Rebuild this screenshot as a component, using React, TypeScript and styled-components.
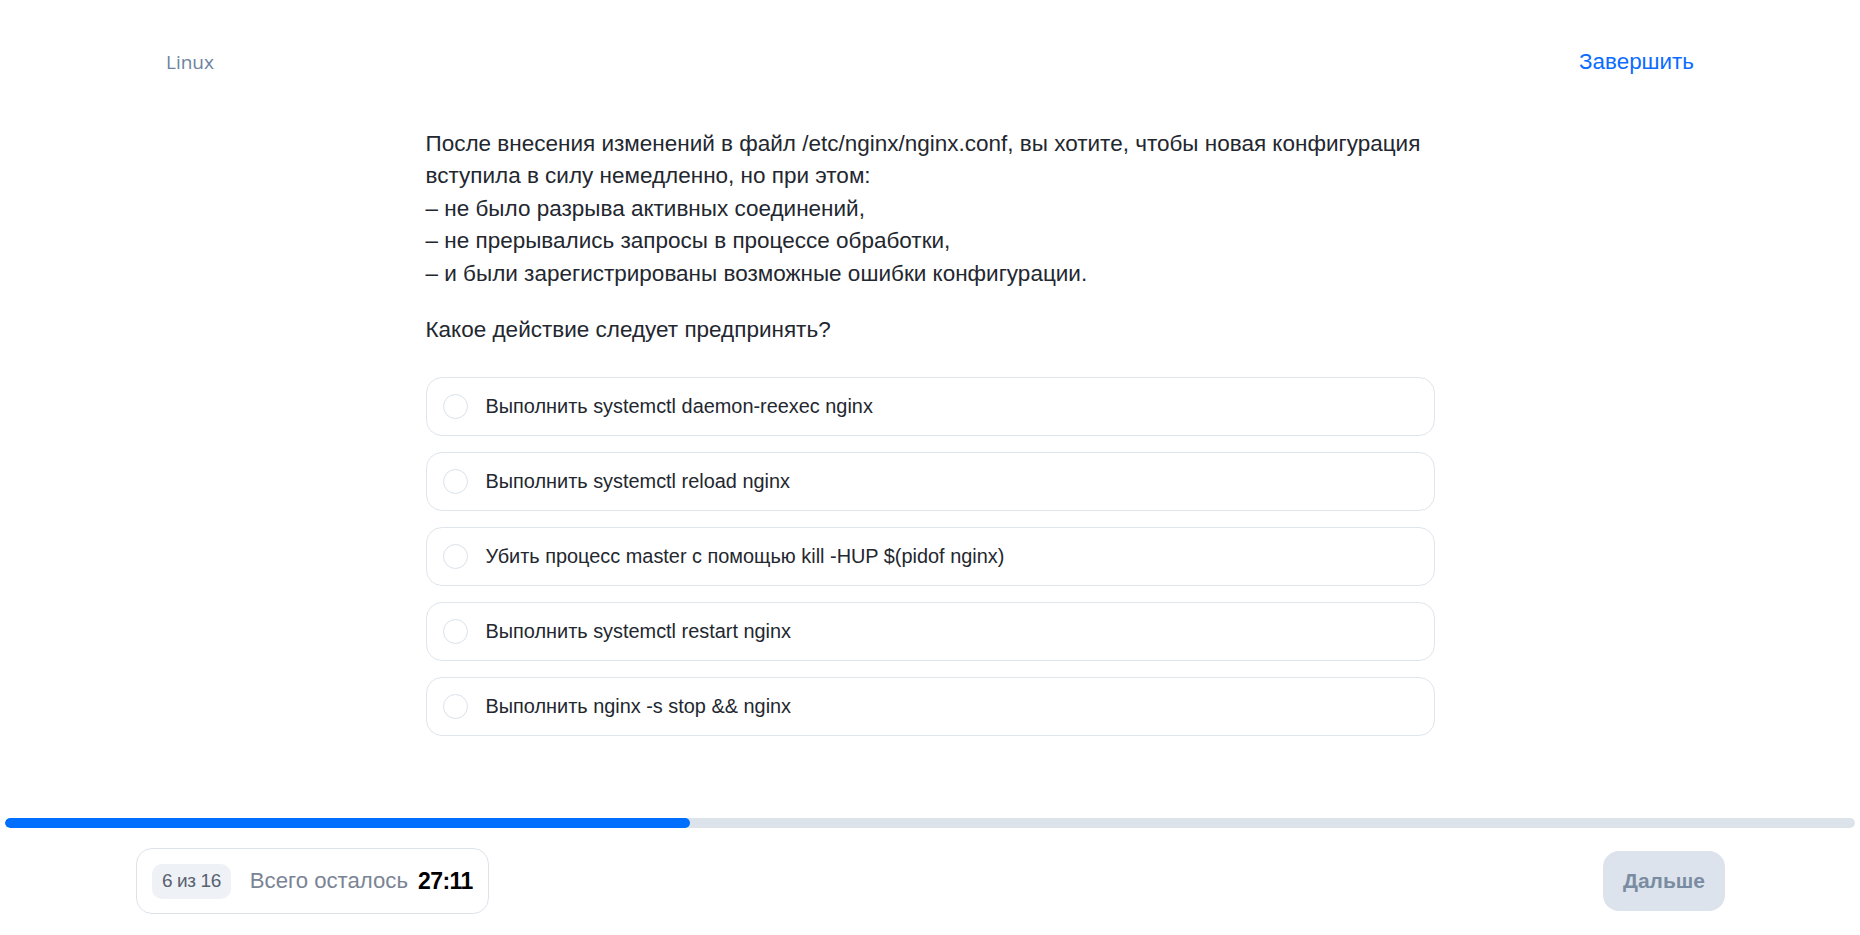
import styled, { createGlobalStyle } from 'styled-components';

const GlobalStyle = createGlobalStyle`
  html, body {
    margin: 0;
    padding: 0;
    background: #ffffff;
  }
  body {
    font-family: 'Liberation Sans', Arial, sans-serif;
    color: #23272f;
  }
  * {
    box-sizing: border-box;
  }
`;

const Page = styled.div`
  min-height: 935px;
  display: flex;
  flex-direction: column;
`;

const Header = styled.header`
  display: flex;
  align-items: center;
  justify-content: space-between;
  padding: 50px 166px 0;
  height: 74px;
`;

const Subject = styled.span`
  font-family: 'Open Sans', sans-serif;
  font-size: 19px;
  line-height: 24px;
  color: #6d83a0;
`;

const FinishLink = styled.button`
  border: none;
  background: none;
  padding: 0;
  font-family: inherit;
  font-size: 22.4px;
  line-height: 24px;
  color: #0b6cff;
  cursor: pointer;
`;

const Main = styled.main`
  width: 1009px;
  margin: 54px auto 0;
`;

const Question = styled.div`
  font-size: 22.5px;
  line-height: 32.4px;
  white-space: nowrap;
  color: #23272f;
`;

const Prompt = styled.p`
  margin: 24px 0 0;
  font-size: 22.5px;
  line-height: 32px;
`;

const Options = styled.div`
  display: flex;
  flex-direction: column;
  gap: 16px;
  margin-top: 31px;
`;

const Option = styled.label`
  height: 59px;
  display: flex;
  align-items: center;
  gap: 18px;
  padding: 0 16px;
  border: 1px solid #dfe5ec;
  border-radius: 16px;
  cursor: pointer;
  font-size: 19.9px;
  color: #23272f;
`;

const Radio = styled.span`
  width: 25px;
  height: 25px;
  flex: none;
  border-radius: 50%;
  border: 1px solid #dae1ea;
  background: #fff;
`;

const Footer = styled.footer`
  margin-top: auto;
  padding-bottom: 21px;
`;

const Track = styled.div`
  height: 10px;
  margin: 0 5px;
  border-radius: 5px;
  background: #dde3eb;
  overflow: hidden;
`;

const Fill = styled.div`
  height: 100%;
  border-radius: 5px;
  background: #006fff;
`;

const FooterRow = styled.div`
  display: flex;
  align-items: center;
  justify-content: space-between;
  padding: 20px 135px 0 136px;
`;

const StatusCard = styled.div`
  height: 66px;
  display: flex;
  align-items: center;
  padding: 0 15px;
  border: 1px solid #dde3eb;
  border-radius: 16px;
`;

const Counter = styled.span`
  height: 35px;
  padding: 0 10px;
  display: inline-flex;
  align-items: center;
  border-radius: 10px;
  background: #eef2f7;
  color: #58616e;
  font-size: 19px;
  letter-spacing: -0.4px;
`;

const TimeLabel = styled.span`
  margin-left: 19px;
  font-size: 22.2px;
  color: #7b8494;
`;

const TimeValue = styled.span`
  margin-left: 10px;
  font-size: 23px;
  font-weight: 700;
  color: #000;
  letter-spacing: -0.6px;
`;

const NextButton = styled.button`
  width: 122px;
  height: 60px;
  border: none;
  border-radius: 16px;
  background: #dce3ec;
  color: #7a8ca1;
  font-family: inherit;
  font-size: 21px;
  font-weight: 700;
  cursor: not-allowed;
`;

const options = [
  'Выполнить systemctl daemon-reexec nginx',
  'Выполнить systemctl reload nginx',
  'Убить процесс master с помощью kill -HUP $(pidof nginx)',
  'Выполнить systemctl restart nginx',
  'Выполнить nginx -s stop && nginx',
];

const current = 6;
const total = 16;

export default function App() {
  return (
    <Page>
      <GlobalStyle />
      <Header>
        <Subject>Linux</Subject>
        <FinishLink type="button">Завершить</FinishLink>
      </Header>
      <Main>
        <Question>
          После внесения изменений в файл /etc/nginx/nginx.conf, вы хотите, чтобы новая конфигурация
          <br />
          вступила в силу немедленно, но при этом:
          <br />– не было разрыва активных соединений,
          <br />– не прерывались запросы в процессе обработки,
          <br />– и были зарегистрированы возможные ошибки конфигурации.
        </Question>
        <Prompt>Какое действие следует предпринять?</Prompt>
        <Options>
          {options.map((text) => (
            <Option key={text}>
              <Radio />
              {text}
            </Option>
          ))}
        </Options>
      </Main>
      <Footer>
        <Track>
          <Fill style={{ width: `${(current / total) * 100 - 0.5}%` }} />
        </Track>
        <FooterRow>
          <StatusCard>
            <Counter>
              {current} из {total}
            </Counter>
            <TimeLabel>Всего осталось</TimeLabel>
            <TimeValue>27:11</TimeValue>
          </StatusCard>
          <NextButton type="button" disabled>
            Дальше
          </NextButton>
        </FooterRow>
      </Footer>
    </Page>
  );
}
